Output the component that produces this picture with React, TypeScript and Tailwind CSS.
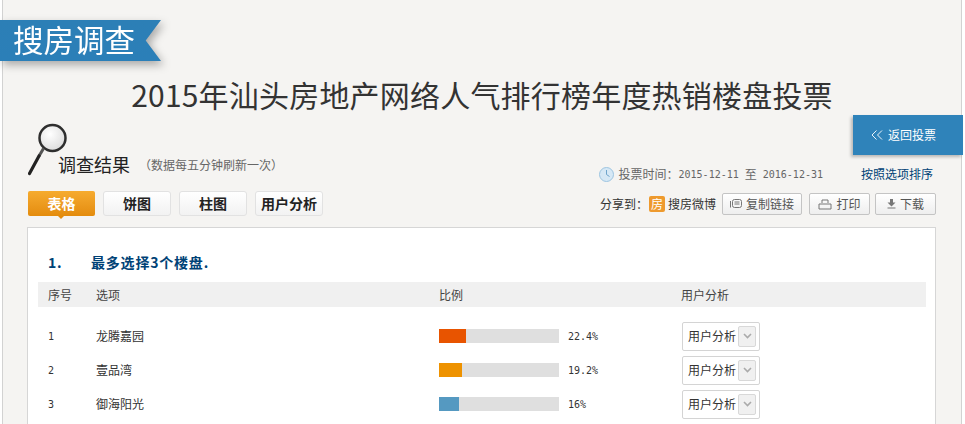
import React from "react";

const cjk = "font-['Noto_Sans_CJK_SC',sans-serif]";
const mono = "font-['DejaVu_Sans_Mono',monospace]";

const rows = [
  { n: "1", name: "龙腾嘉园", pct: "22.4%", w: "w-[27px]", color: "bg-[#e85400]" },
  { n: "2", name: "壹品湾", pct: "19.2%", w: "w-[23px]", color: "bg-[#ee9200]" },
  { n: "3", name: "御海阳光", pct: "16%", w: "w-[20px]", color: "bg-[#5599c1]" },
];

function Tab({ label, active }: { label: string; active?: boolean }) {
  if (active) {
    return (
      <div className="relative flex h-[25px] w-[67px] items-center justify-center rounded-[2px] bg-gradient-to-b from-[#f6ab2e] to-[#e48c0c] text-[14px] font-bold text-white">
        {label}
        <span className="absolute -bottom-[3px] left-[30px] h-0 w-0 border-x-[3px] border-t-[3px] border-x-transparent border-t-[#e48c0c]" />
      </div>
    );
  }
  return (
    <div className="flex h-[25px] w-[68px] items-center justify-center rounded-[3px] border border-[#e2e2e2] bg-gradient-to-b from-white to-[#f2f2f2] text-[14px] font-bold text-[#222]">
      {label}
    </div>
  );
}

function Btn({ children, w }: { children: React.ReactNode; w: string }) {
  return (
    <div className={`flex h-[22px] items-center justify-center gap-[4px] rounded-[2px] border border-[#c4c4c4] bg-gradient-to-b from-white to-[#eeeeee] text-[12px] text-[#555] ${w}`}>
      {children}
    </div>
  );
}

function Row({ r }: { r: (typeof rows)[number] }) {
  return (
    <div className="flex h-[34px] items-center text-[12px] text-[#333]">
      <div className={`w-[58px] pl-[10px] text-[10px] ${mono}`}>{r.n}</div>
      <div className="w-[343px] text-[12px]">{r.name}</div>
      <div className="flex w-[243px] items-center">
        <div className="h-[14px] w-[120px] bg-[#dfdfdf]">
          <div className={`h-full ${r.w} ${r.color}`} />
        </div>
        <div className={`ml-[9px] text-[10px] ${mono}`}>{r.pct}</div>
      </div>
      <div className="flex h-[29px] w-[78px] items-center justify-between rounded-[2px] border border-[#d4d4d4] pl-[5px] pr-[3px] text-[12px]">
        <span>用户分析</span>
        <span className="flex h-[21px] w-[18px] items-center justify-center rounded-[2px] border border-[#d8d8d8] bg-[#f0f0f0]">
          <svg width="9" height="6" viewBox="0 0 9 6">
            <path d="M1 1l3.5 3.5L8 1" fill="none" stroke="#aaa" strokeWidth="1.6" />
          </svg>
        </span>
      </div>
    </div>
  );
}

export default function App() {
  return (
    <div className={`h-[424px] w-[965px] overflow-hidden bg-white ${cjk}`}>
      <div className="ml-[2px] h-[424px] w-[960px] border-x border-[#d2d2d2] bg-[#f5f4f2]">
        {/* ribbon */}
        <div className="-ml-[3px] pt-[20px] drop-shadow-[3px_4px_4px_rgba(0,0,0,0.3)]">
          <div className="h-[41px] w-[161px] bg-gradient-to-b from-[#2c7fb6] to-[#2b7fb8] pl-[13px] text-[30.500px] leading-[38px] text-white [clip-path:polygon(0_0,100%_0,90.500%_50%,100%_100%,0_100%)]">
            搜房调查
          </div>
        </div>

        {/* title */}
        <div className="mt-[12px] h-[44px] text-center text-[30px] leading-[43px] tracking-[0.2px] text-[#333]">
          2015年汕头房地产网络人气排行榜年度热销楼盘投票
        </div>

        {/* heading + tabs / actions */}
        <div className="flex justify-between pl-[25px] pr-[25px]">
          <div>
            <div className="mt-[6px] flex h-[53px] items-end">
              <svg width="40" height="53" viewBox="0 0 40 53" className="shrink-0">
                <defs>
                  <radialGradient id="glass" cx="40%" cy="35%" r="75%">
                    <stop offset="0%" stopColor="#ffffff" />
                    <stop offset="100%" stopColor="#d8d8d8" />
                  </radialGradient>
                </defs>
                <circle cx="24.500" cy="15" r="13" fill="url(#glass)" stroke="#2e2e2e" strokeWidth="2.500" />
                <path d="M15.500 25.500L11 33" stroke="#555" strokeWidth="3" />
                <path d="M11 33L1.500 50.500" stroke="#222" strokeWidth="3.200" strokeLinecap="round" />
              </svg>
              <span className="-ml-[10px] text-[18px] leading-[24px] text-[#222]">调查结果</span>
              <span className="ml-[9px] text-[12px] leading-[22px] text-[#666]">（数据每五分钟刷新一次）</span>
            </div>
            <div className="mt-[15px] flex gap-[8px]">
              <Tab label="表格" active />
              <Tab label="饼图" />
              <Tab label="柱图" />
              <Tab label="用户分析" />
            </div>
          </div>

          <div className="-mt-[2px] flex flex-col items-end">
            <div className="-mr-[27px] flex h-[40px] w-[110px] items-center gap-[5px] bg-[#2f83ba] pl-[18px] text-[12px] text-white shadow-[-2px_2px_3px_rgba(0,0,0,0.25)]">
              <svg width="12" height="10" viewBox="0 0 12 10">
                <path d="M5.500 0.500L1 5l4.500 4.500M11 0.500L6.500 5l4.500 4.500" fill="none" stroke="#fff" strokeWidth="0.9" />
              </svg>
              返回投票
            </div>
            <div className="mr-[3px] mt-[8px] flex h-[22px] items-center text-[12px] text-[#666]">
              <svg width="15" height="15" viewBox="0 0 15 15" className="mr-[5px]">
                <circle cx="7.500" cy="7.500" r="7" fill="#d6e8f5" stroke="#9cc4e0" />
                <path d="M7.500 3v4.500l3 2" fill="none" stroke="#6fa4cb" />
              </svg>
              <span>投票时间：</span>
              <span className={`text-[10px] ${mono}`}>2015-12-11</span>
              <span className="mx-[6px]">至</span>
              <span className={`text-[10px] ${mono}`}>2016-12-31</span>
              <span className="ml-[38px] text-[#004276]">按照选项排序</span>
            </div>
            <div className="mt-[8px] flex items-center text-[12px] text-[#333]">
              <span className="mr-[1px]">分享到：</span>
              <span className="mr-[3px] flex h-[16px] w-[16px] items-center justify-center rounded-[2px] bg-[#ee9a2e] text-[12px] leading-none text-white">房</span>
              <span className="mr-[6px]">搜房微博</span>
              <Btn w="w-[80px] mr-[7px]">
                <svg width="12" height="10" viewBox="0 0 12 10">
                  <rect x="2.500" y="0.500" width="9" height="8" rx="2" fill="none" stroke="#777" />
                  <path d="M4.500 3h5M4.500 5h5M0.500 2v6.500" fill="none" stroke="#777" />
                </svg>
                复制链接
              </Btn>
              <Btn w="w-[61px] mr-[5px]">
                <svg width="14" height="11" viewBox="0 0 14 11">
                  <path d="M4 4V1h6v3M1 5h12v5H1z" fill="none" stroke="#777" />
                </svg>
                打印
              </Btn>
              <Btn w="w-[61px]">
                <svg width="9" height="10" viewBox="0 0 9 10">
                  <path d="M3 0h3v3.500h2.500L4.500 7.500.500 3.500H3zM0.500 8.500h8v1h-8z" fill="#777" />
                </svg>
                下载
              </Btn>
            </div>
          </div>
        </div>

        {/* card */}
        <div className="ml-[24px] mr-[25px] mt-[11px] h-[300px] border border-[#d6d6d6] bg-white pl-[10px] pr-[9px]">
          <div className="flex pt-[24px] text-[14px] font-bold leading-[20px] tracking-[0.8px] text-[#004276]">
            <span className="w-[53px] pl-[10px]">1.</span>
            <span>最多选择3个楼盘.</span>
          </div>
          <div className="mt-[10px] flex h-[25px] items-center bg-[#f0f0f0] text-[12px] text-[#444]">
            <div className="w-[58px] pl-[10px]">序号</div>
            <div className="w-[343px]">选项</div>
            <div className="w-[242px]">比例</div>
            <div>用户分析</div>
          </div>
          <div className="mt-[12px]">
            {rows.map((r) => (
              <Row key={r.n} r={r} />
            ))}
          </div>
        </div>
      </div>
    </div>
  );
}
